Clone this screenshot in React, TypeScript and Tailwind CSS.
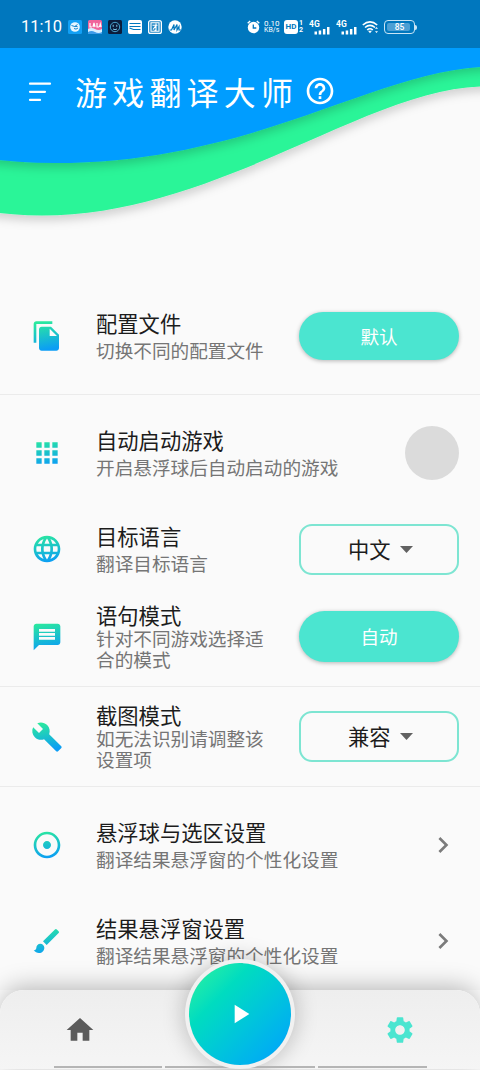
import type { ReactNode } from 'react';
import {
  MdAdjust,
  MdApps,
  MdBrush,
  MdBuild,
  MdChevronRight,
  MdFileCopy,
  MdHelpOutline,
  MdHome,
  MdLanguage,
  MdMessage,
  MdPlayArrow,
  MdSettings,
} from 'react-icons/md';
import type { IconType } from 'react-icons';

function StatusBar() {
  return (
    <div className="flex h-12 items-center bg-[#0077be] pt-[6px] text-white">
      <span className="ml-[21px] w-[47px] font-[Roboto] text-[16.5px] leading-none font-normal">11:10</span>
      <svg className="h-[14px] w-[114px]" viewBox="0 0 114 14">
        <rect width="14" height="14" rx="1.5" fill="#12a0f5" />
        <circle cx="7" cy="7" r="4.8" fill="#e6f6ff" />
        <path d="M3.500 5.500q3.500 2.500 6-1M6 8.500q2 1.500 4-.5M6.500 6.500h3" stroke="#1684cc" strokeWidth="1" fill="none" />
        <rect x="20" width="14" height="14" rx="1.5" fill="#f0649b" />
        <path d="M20 9q3.5-2 7 0t7 0v5H20z" fill="#d8eeff" />
        <path d="M20 12q3.5-2 7 0t7 0v2H20z" fill="#3c9be8" />
        <path d="M22 3v4h2M25 7l1-4 1 4M29 3v4h2M31.5 7l.8-3 .8 3" stroke="#fff" strokeWidth="1.2" fill="none" />
        <rect x="40" width="14" height="14" rx="1.5" fill="#0b1c3b" />
        <circle cx="47" cy="7" r="4.7" stroke="#48a4cf" strokeWidth="1" fill="none" />
        <path d="M45.2 4.8v2M48.8 4.8v2M45 9q2 1.3 4 0" stroke="#7dc6e6" strokeWidth="1" fill="none" />
        <rect x="60" width="14" height="14" rx="2" fill="#fff" />
        <path d="M61.5 3.5h11M61.5 6.500h11M61.5 8l4 1.500h7" stroke="#0077be" strokeWidth="1.2" fill="none" />
        <rect x="80.6" y=".6" width="12.8" height="12.8" rx="2" stroke="#fff" strokeWidth="1.2" fill="#ffffff22" />
        <path d="M83 2.7h8v8.6h-8zM84.5 5.2h5M88 3.5v6.8h-1.5M88 5.5l-3 4" stroke="#fff" strokeWidth="1.1" fill="none" />
        <circle cx="107" cy="7" r="6.7" fill="#fff" />
        <path d="M101.500 10h2L106 4.500v5.500L109 4.500V10l2-3.500v3.500h2" stroke="#0077be" strokeWidth="1.2" fill="none" />
      </svg>
      <svg className="ml-[65px] h-[14px] w-[13px]" viewBox="0 0 13 14">
        <circle cx="6.5" cy="7.5" r="5.7" fill="#fff" />
        <path d="M.7 3.3L3.2 1M12.3 3.3L9.8 1" stroke="#fff" strokeWidth="1.4" />
        <path d="M6.3 4.5v3.500h3" stroke="#0077be" strokeWidth="1.3" fill="none" />
      </svg>
      <div className="ml-1 w-[18px] font-[Roboto] leading-[7px] font-normal">
        <div className="text-[8px]">0.10</div>
        <div className="text-[7px]">KB/s</div>
      </div>
      <div className="ml-[2px] flex h-[14px] w-[14px] items-center justify-center rounded-[3px] bg-white font-[Roboto] text-[8px] leading-none font-bold text-[#0077be]">
        HD
      </div>
      <div className="ml-[1px] w-[5px] font-[Roboto] text-[7px] leading-[7px] font-bold">
        <div>1</div>
        <div>2</div>
      </div>
      <Signal className="ml-[5px]" />
      <Signal className="ml-[6px]" />
      <svg className="ml-[5px] h-[14px] w-[17px]" viewBox="0 0 17 14">
        <g stroke="#fff" strokeWidth="1.600" fill="none">
          <path d="M.8 5q7.200-6.400 14.400 0" />
          <path d="M3 7.500q5-4.400 10 0" />
          <path d="M5.200 10q2.800-2.500 5.600 0" />
        </g>
        <path d="M6 10.700h4l-2 2.500zM14.500 7l1.500 1.800h-3zM14.500 13l1.500-1.800h-3z" fill="#fff" />
      </svg>
      <div className="ml-[5px] flex h-[14px] w-[31px] items-center rounded-[4px] border border-[#c8e4f5] p-[2px]">
        <div className="flex h-full w-[23px] items-center justify-center rounded-[2px] bg-[#4c9fd4] pl-[2px] font-[Roboto] text-[8.5px] leading-none font-medium">
          85
        </div>
      </div>
      <div className="h-[5px] w-[1.5px] rounded-r bg-[#c8e4f5]" />
    </div>
  );
}

function Signal({ className }: { className: string }) {
  return (
    <svg className={`h-[15px] w-[21px] ${className}`} viewBox="0 0 21 15">
      <text x="0" y="7.3" fontSize="8.5" fontWeight="700" fontFamily="Roboto" fill="#fff">
        4G
      </text>
      <path d="M5.5 11.500h2.500v3H5.500zM9.700 10.500h2.500v4H9.700zM13.900 9h2.500v5.500h-2.500zM18 7h2.500v7.500H18z" fill="#fff" />
    </svg>
  );
}

function Header() {
  return (
    <div className="relative h-[230px]">
      <svg className="absolute top-0 left-0 h-[192px] w-[480px]" viewBox="0 48 480 192">
        <defs>
          <filter id="waveShadow" x="-10%" y="-10%" width="120%" height="130%">
            <feDropShadow dx="0" dy="5" stdDeviation="5" floodColor="#000" floodOpacity="0.17" />
          </filter>
        </defs>
        <path
          d="M-30 20V208Q5 215.5 42 215.5C215 215.5 365 90 480 86.5L510 86V20Z"
          fill="#2bf598"
          filter="url(#waveShadow)"
        />
        <path
          d="M-30 20V156Q10 163 55 163C250 163 370 74 480 67L510 66V20Z"
          fill="#009dff"
          filter="url(#waveShadow)"
        />
      </svg>
      <div className="relative flex h-[88px] items-center text-white">
        <svg className="ml-[28px] h-5 w-6" viewBox="0 0 24 20" stroke="#fff" strokeWidth="2.2" strokeLinecap="round">
          <path d="M2 1.700h20M2 9.800h15M2 17.900h10" />
        </svg>
        <h1 className="-mt-[2px] ml-[23px] w-[229px] font-['Noto_Sans_CJK_SC',sans-serif] text-[32px] leading-none font-normal tracking-[5.2px] whitespace-nowrap">
          游戏翻译大师
        </h1>
        <MdHelpOutline size={32} className="-mt-[2px]" />
      </div>
    </div>
  );
}

type RowProps = {
  icon: IconType;
  title: string;
  lines: string[];
  height: string;
  divided?: boolean;
  children: ReactNode;
};

function Row({ icon: Icon, title, lines, height, divided, children }: RowProps) {
  return (
    <div className={`flex shrink-0 items-center pr-[21px] pl-[31px] ${height} ${divided ? 'border-b border-[#ebebeb]' : ''}`}>
      <Icon size={32} fill="url(#iconGradient)" className="shrink-0" />
      <div className="-mt-px ml-[33px] grow whitespace-nowrap">
        <div className={`text-[21.3px] text-[#1c1c1c] ${lines.length > 1 ? 'leading-[24px]' : 'leading-[28px]'}`}>{title}</div>
        {lines.map((line) => (
          <div key={line} className={`text-[18.65px] text-[#757575] ${lines.length > 1 ? 'leading-[21.5px]' : 'leading-[26px]'}`}>
            {line}
          </div>
        ))}
      </div>
      {children}
    </div>
  );
}

function PillButton({ label, height }: { label: string; height: string }) {
  return (
    <button className={`w-[160px] shrink-0 rounded-full bg-[#4be5d0] text-[18.6px] leading-none text-white shadow-[0_1px_4px_rgba(0,0,0,0.28)] ${height}`}>
      {label}
    </button>
  );
}

function Select({ label }: { label: string }) {
  return (
    <button className="flex h-[51px] w-[160px] shrink-0 items-center rounded-[13px] border-2 border-[#7de5d2] pb-px pl-[47px] text-[21.3px] leading-none text-[#1c1c1c]">
      {label}
      <svg className="mt-px ml-[9px] h-[7px] w-[13px]" viewBox="0 0 13 7">
        <path d="M0 0h13L6.5 7z" fill="#616161" />
      </svg>
    </button>
  );
}

function Chevron() {
  return <MdChevronRight size={32} className="shrink-0 text-[#7b7b7b]" />;
}

function BottomNav() {
  return (
    <div className="absolute top-[990px] left-0 h-[80px] w-full bg-white">
      <div className="absolute top-[-27px] left-[189px] size-[102px] rounded-full shadow-[0_0_22px_5px_rgba(0,0,0,0.22)]" />
      <div className="flex h-[79px] items-center justify-between rounded-t-[24px] bg-linear-to-b from-[#eeeeee] to-[#f5f5f5] px-[64px] shadow-[0_-3px_24px_rgba(0,0,0,0.27)]">
        <MdHome size={32} className="text-[#5b5b5b]" />
        <MdSettings size={32} className="text-[#4be5d0]" />
      </div>
      <div className="absolute top-[76px] left-[54px] flex gap-[3px]">
        <div className="h-[2px] w-[108px] bg-[#b5b5b5]" />
        <div className="h-[2px] w-[150px] bg-[#b5b5b5]" />
        <div className="h-[2px] w-[109px] bg-[#b5b5b5]" />
      </div>
      <div className="absolute top-[-27px] left-[189px] flex size-[102px] items-center justify-center rounded-full bg-linear-to-br from-[#2bf598] to-[#009dff] text-white ring-[4px] ring-[#f1f1f1]">
        <MdPlayArrow size={32} />
      </div>
    </div>
  );
}

export default function App() {
  return (
    <div className="relative flex h-[1070px] w-[480px] flex-col overflow-hidden bg-[#fafafa] font-['Noto_Sans_CJK_SC',sans-serif] font-normal">
      <svg className="absolute size-0">
        <linearGradient id="iconGradient" gradientUnits="userSpaceOnUse" x1="9" y1="1" x2="13" y2="22">
          <stop offset="0" stopColor="#2bea9d" />
          <stop offset="1" stopColor="#0b9df5" />
        </linearGradient>
      </svg>
      <StatusBar />
      <Header />
      <Row icon={MdFileCopy} title="配置文件" lines={['切换不同的配置文件']} height="h-[117px]" divided>
        <PillButton label="默认" height="h-[48px]" />
      </Row>
      <Row icon={MdApps} title="自动启动游戏" lines={['开启悬浮球后自动启动的游戏']} height="h-[116px]">
        <div className="size-[54px] shrink-0 rounded-full bg-[#dbdbdb]" />
      </Row>
      <Row icon={MdLanguage} title="目标语言" lines={['翻译目标语言']} height="h-[76px]">
        <Select label="中文" />
      </Row>
      <Row icon={MdMessage} title="语句模式" lines={['针对不同游戏选择适', '合的模式']} height="h-[100px]" divided>
        <PillButton label="自动" height="h-[51px]" />
      </Row>
      <Row icon={MdBuild} title="截图模式" lines={['如无法识别请调整该', '设置项']} height="h-[100px]" divided>
        <Select label="兼容" />
      </Row>
      <Row icon={MdAdjust} title="悬浮球与选区设置" lines={['翻译结果悬浮窗的个性化设置']} height="h-[116px]">
        <Chevron />
      </Row>
      <Row icon={MdBrush} title="结果悬浮窗设置" lines={['翻译结果悬浮窗的个性化设置']} height="h-[76px]">
        <Chevron />
      </Row>
      <BottomNav />
    </div>
  );
}
